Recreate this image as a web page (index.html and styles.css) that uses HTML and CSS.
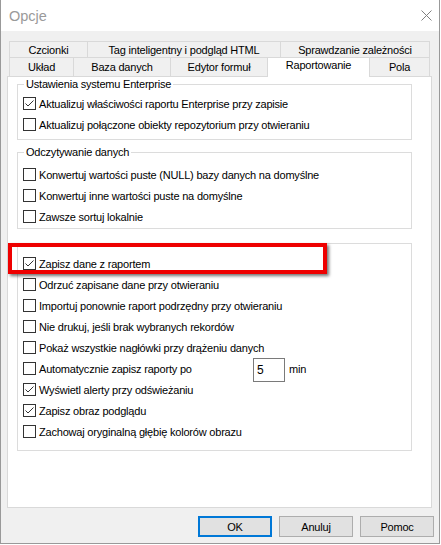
FILE: index.html
```html
<!DOCTYPE html>
<html lang="pl">
<head>
<meta charset="utf-8">
<title>Opcje</title>
<link rel="stylesheet" href="styles.css">
</head>
<body>
<div class="window">
  <div class="titlebar">
    <span class="title">Opcje</span>
    <svg class="close" viewBox="0 0 11 11" width="11" height="11"><path d="M0.5 0.5L10.5 10.5M10.5 0.5L0.5 10.5" stroke="#808080" stroke-width="1" fill="none"/></svg>
  </div>
  <div class="client">
    <div class="tabs">
      <div class="tabrow back">
        <div class="tab w-czcionki">Czcionki</div>
        <div class="tab w-tag">Tag inteligentny i podgląd HTML</div>
        <div class="tab w-spr last">Sprawdzanie zależności</div>
      </div>
      <div class="tabrow front">
        <div class="tab w-uklad">Układ</div>
        <div class="tab w-baza">Baza danych</div>
        <div class="tab w-edytor">Edytor formuł</div>
        <div class="tab w-rap selected">Raportowanie</div>
        <div class="tab w-pola last">Pola</div>
      </div>
    </div>
    <div class="panel">
      <fieldset class="group g1">
        <legend>Ustawienia systemu Enterprise</legend>
        <div class="row"><span class="cb"><svg viewBox="0 0 11 11" width="11" height="11"><polyline points="1.5,5.5 4,8 9.5,2.5"/></svg></span><span>Aktualizuj właściwości raportu Enterprise przy zapisie</span></div>
        <div class="row"><span class="cb"></span><span>Aktualizuj połączone obiekty repozytorium przy otwieraniu</span></div>
      </fieldset>
      <fieldset class="group g2">
        <legend>Odczytywanie danych</legend>
        <div class="row"><span class="cb"></span><span>Konwertuj wartości puste (NULL) bazy danych na domyślne</span></div>
        <div class="row"><span class="cb"></span><span>Konwertuj inne wartości puste na domyślne</span></div>
        <div class="row"><span class="cb"></span><span>Zawsze sortuj lokalnie</span></div>
      </fieldset>
      <fieldset class="group g3">
        <div class="row"><span class="cb"><svg viewBox="0 0 11 11" width="11" height="11"><polyline points="1.5,5.5 4,8 9.5,2.5"/></svg></span><span>Zapisz dane z raportem</span></div>
        <div class="row"><span class="cb"></span><span>Odrzuć zapisane dane przy otwieraniu</span></div>
        <div class="row"><span class="cb"></span><span>Importuj ponownie raport podrzędny przy otwieraniu</span></div>
        <div class="row"><span class="cb"></span><span>Nie drukuj, jeśli brak wybranych rekordów</span></div>
        <div class="row"><span class="cb"></span><span>Pokaż wszystkie nagłówki przy drążeniu danych</span></div>
        <div class="row"><span class="cb"></span><span class="autolabel">Automatycznie zapisz raporty po</span><span class="num">5</span><span class="unit">min</span></div>
        <div class="row"><span class="cb"><svg viewBox="0 0 11 11" width="11" height="11"><polyline points="1.5,5.5 4,8 9.5,2.5"/></svg></span><span>Wyświetl alerty przy odświeżaniu</span></div>
        <div class="row"><span class="cb"><svg viewBox="0 0 11 11" width="11" height="11"><polyline points="1.5,5.5 4,8 9.5,2.5"/></svg></span><span>Zapisz obraz podglądu</span></div>
        <div class="row"><span class="cb"></span><span>Zachowaj oryginalną głębię kolorów obrazu</span></div>
      </fieldset>
    </div>
    <div class="buttons">
      <div class="btn default">OK</div>
      <div class="btn">Anuluj</div>
      <div class="btn">Pomoc</div>
    </div>
  </div>
  <div class="highlight"></div>
</div>
</body>
</html>
```

FILE: styles.css
```css
* { box-sizing: border-box; }
html, body { margin: 0; padding: 0; background: #ffffff; }
body {
  font-family: "Liberation Sans", Arial, sans-serif;
  font-size: 11px;
  color: #000000;
  letter-spacing: -0.2px;
}
.window {
  position: relative;
  width: 440px;
  background: #f0f0f0;
  border: 1px solid #999999;
  border-top: none;
}
.titlebar {
  height: 31px;
  background: #ffffff;
  display: flex;
  align-items: center;
  justify-content: space-between;
  padding: 0 7px 0 8px;
}
.title {
  font-size: 14.5px;
  color: #9a9a9a;
  letter-spacing: 0;
}
.close { display: block; }
.client {
  padding: 10px 7px 6px 6px;
}
.tabs { margin: 0 2px; }
.tabrow { display: flex; }
.tab {
  display: flex;
  align-items: center;
  justify-content: center;
  white-space: nowrap;
  background: #f0f0f0;
  border-top: 1px solid #d9d9d9;
  border-left: 1px solid #d9d9d9;
}
.tab.last { border-right: 1px solid #d9d9d9; }
.back .tab { height: 16px; }
.front .tab { height: 19px; }
.w-czcionki { width: 78px; }
.w-tag { width: 193px; }
.w-spr { width: 150px; }
.w-uklad { width: 64px; }
.w-baza { width: 97px; }
.w-edytor { width: 97px; }
.w-rap { width: 102px; }
.w-pola { width: 61px; }
.front .tab.selected {
  position: relative;
  z-index: 1;
  height: 20px;
  margin-bottom: -1px;
  padding-bottom: 5px;
  background: #ffffff;
}
.panel {
  height: 432px;
  background: #ffffff;
  border: 1px solid #d9d9d9;
}
.group {
  margin: 0 0 0 9px;
  width: 395px;
  min-width: 0;
  border: 1px solid #dcdcdc;
  padding: 0 0 0 5px;
}
.group legend {
  padding: 0 2px;
  margin-left: 1px;
  line-height: 15px;
  height: 15px;
}
.g1 { padding-top: 1px; padding-bottom: 4px; }
.g2 { margin-top: 5px; padding-top: 4px; padding-bottom: 1px; }
.g3 { margin-top: 14px; padding-top: 9px; padding-bottom: 8px; }
.row {
  height: 21px;
  display: flex;
  align-items: center;
  white-space: nowrap;
}
.cb {
  flex: none;
  width: 13px;
  height: 13px;
  border: 1px solid #333333;
  background: #ffffff;
  margin-right: 3px;
}
.cb svg { display: block; }
.cb polyline { fill: none; stroke: #333333; stroke-width: 1; }
.autolabel { width: 214px; }
.num {
  align-self: flex-start;
  flex: none;
  width: 32px;
  height: 24px;
  border: 1px solid #7a7a7a;
  background: #ffffff;
  padding-left: 3px;
  display: flex;
  align-items: center;
  font-size: 12px;
}
.unit { margin-left: 4px; }
.buttons {
  display: flex;
  justify-content: flex-end;
  gap: 7px;
  margin: 8px -2px 0 0;
}
.btn {
  width: 74px;
  height: 21px;
  background: #e1e1e1;
  border: 1px solid #adadad;
  display: flex;
  align-items: center;
  justify-content: center;
}
.btn.default { border: 2px solid #0078d7; }
.highlight {
  position: absolute;
  left: 7px;
  top: 243px;
  width: 319px;
  height: 31px;
  border: 4px solid #ee0000;
  box-shadow: 2px 2px 3px rgba(0, 0, 0, 0.55);
}
```
